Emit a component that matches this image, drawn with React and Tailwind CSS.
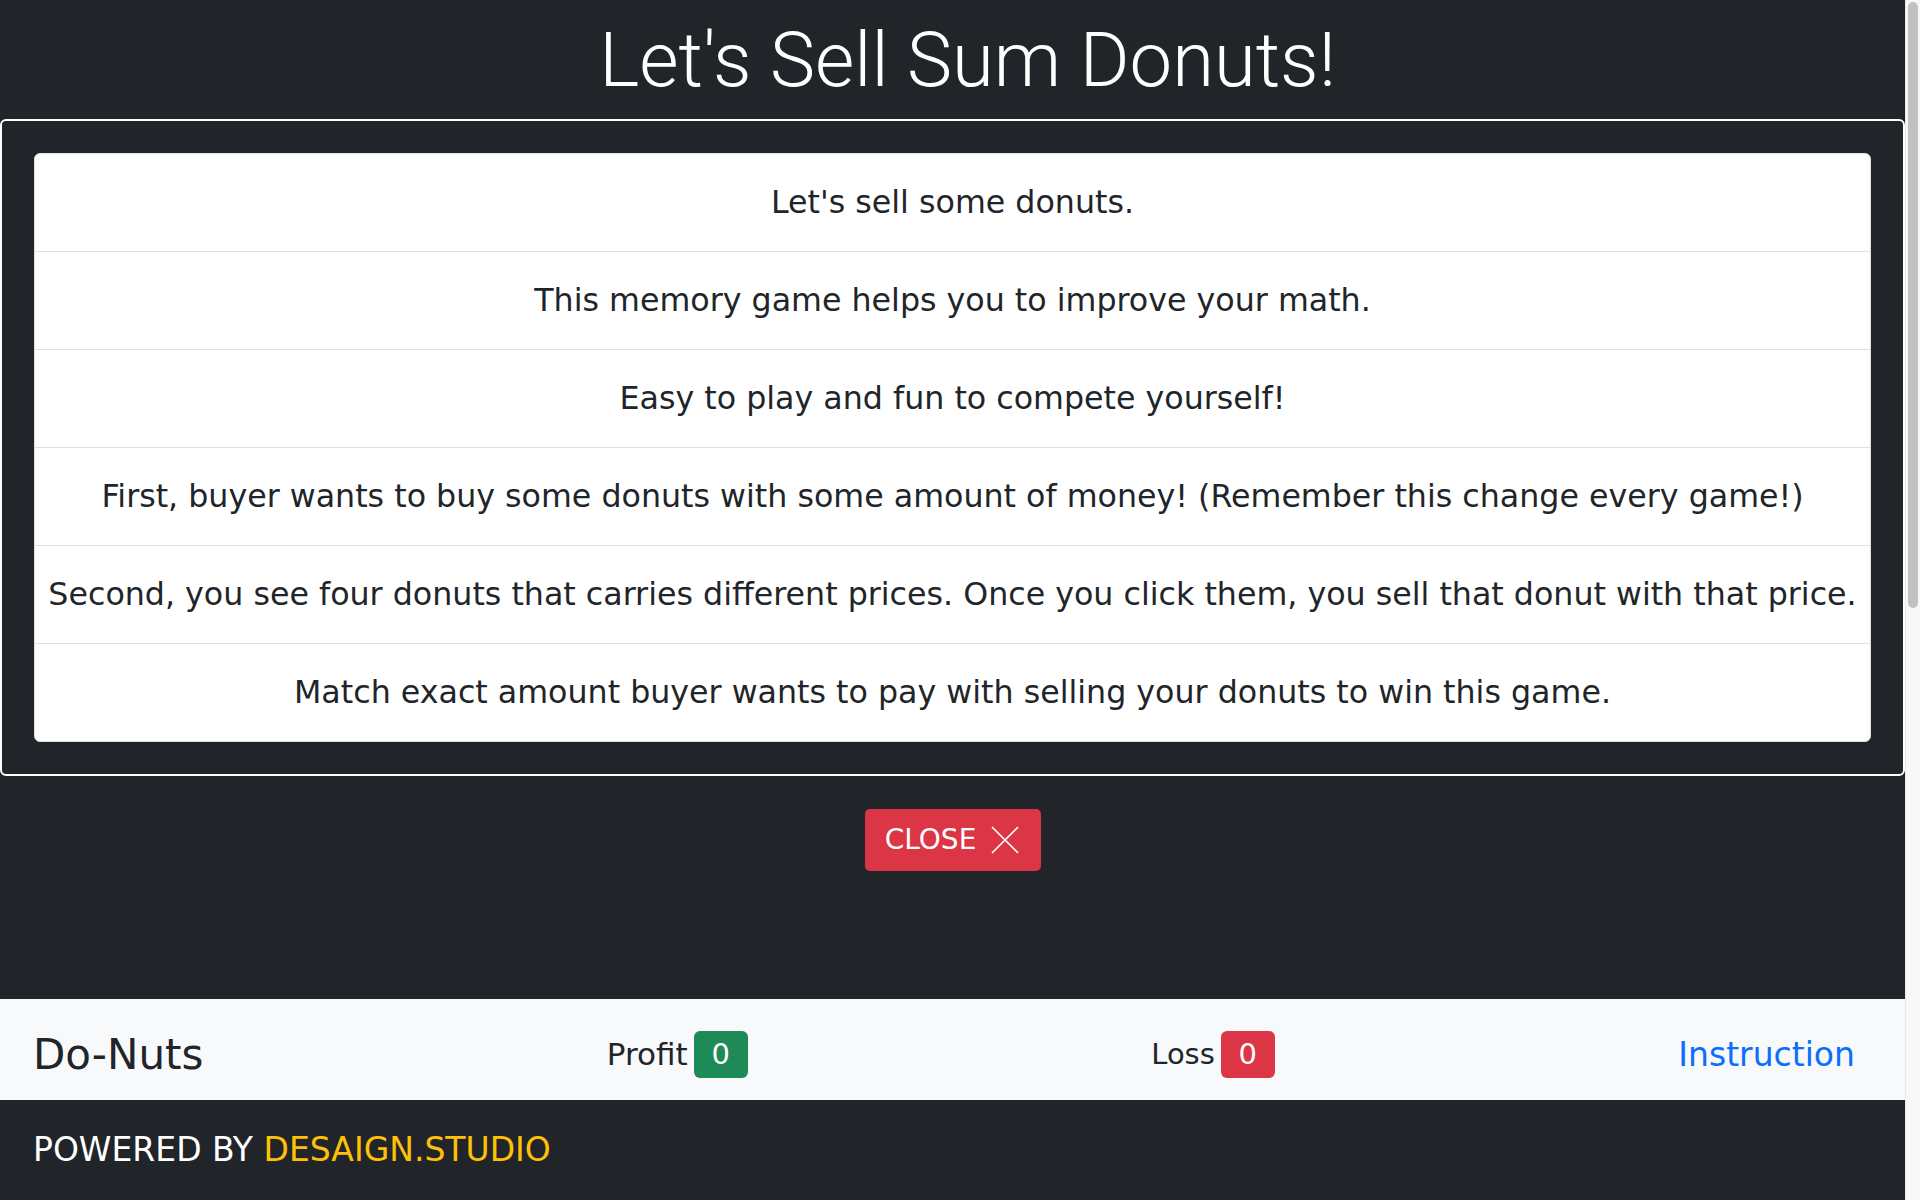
import React from 'react';

const rows = [
  "Let's sell some donuts.",
  'This memory game helps you to improve your math.',
  'Easy to play and fun to compete yourself!',
  'First, buyer wants to buy some donuts with some amount of money! (Remember this change every game!)',
  'Second, you see four donuts that carries different prices. Once you click them, you sell that donut with that price.',
  'Match exact amount buyer wants to pay with selling your donuts to win this game.',
];

function CloseIcon() {
  return (
    <svg width="30" height="30" viewBox="0 0 30 30" fill="none" stroke="white" strokeWidth="1.6">
      <line x1="2" y1="2" x2="28" y2="28" />
      <line x1="28" y1="2" x2="2" y2="28" />
    </svg>
  );
}

function App() {
  return (
    <div className="flex h-screen w-full overflow-hidden bg-[#212529] font-['DejaVu_Sans',sans-serif] text-[#212529]">
      <div className="flex w-[1905px] flex-col">
        {/* title */}
        <header className="flex h-[119px] items-center justify-center pl-[30px]">
          <h1 className="font-['Roboto',sans-serif] text-[76px] font-light leading-none text-white">
            Let's Sell Sum Donuts!
          </h1>
        </header>

        {/* instructions */}
        <section className="rounded-md border-2 border-white p-[32px]">
          <ul className="overflow-hidden rounded-md border border-[#dfdfdf] bg-white">
            {rows.map((text, i) => (
              <li
                key={i}
                className={
                  'flex items-center justify-center text-[31.7px] ' +
                  (i > 0 ? 'h-[98px] border-t border-[#dfdfdf]' : 'h-[97px]')
                }
              >
                {text}
              </li>
            ))}
          </ul>
        </section>

        <div className="flex justify-center pt-[33px] pb-[128px]">
          <button className="flex h-[62px] w-[176px] items-center justify-center gap-[14px] rounded-[5px] bg-[#dc3545] text-[28px] text-white">
            <span>CLOSE</span>
            <CloseIcon />
          </button>
        </div>

        {/* score bar */}
        <nav className="flex h-[101px] items-center justify-between bg-[#f8f9fa] pt-[10px] pl-[33px] pr-[50px]">
          <span className="text-[42px]">Do-Nuts</span>
          <div className="flex items-center gap-[6px] text-[31px]">
            <span>Profit</span>
            <span className="flex h-[47px] w-[54px] items-center justify-center rounded-[6px] bg-[#1e8a57] text-[29px] text-white">0</span>
          </div>
          <div className="flex items-center gap-[6px] text-[29px]">
            <span>Loss</span>
            <span className="flex h-[47px] w-[54px] items-center justify-center rounded-[6px] bg-[#dc3545] text-[29px] text-white">0</span>
          </div>
          <a className="text-[33px] text-[#0d6efd]">Instruction</a>
        </nav>

        <footer className="flex h-[100px] items-center pl-[33px] text-[33px] text-white">
          POWERED BY&nbsp;<span className="text-[#ffc107]">DESAIGN.STUDIO</span>
        </footer>
      </div>

      {/* scrollbar */}
      <div className="w-[15px] border-l border-[#e8e8e8] bg-[#f8f8f8] px-[2px] pt-[2px]">
        <div className="h-[606px] rounded-full bg-[#c1c1c1]" />
      </div>
    </div>
  );
}

export default App;
